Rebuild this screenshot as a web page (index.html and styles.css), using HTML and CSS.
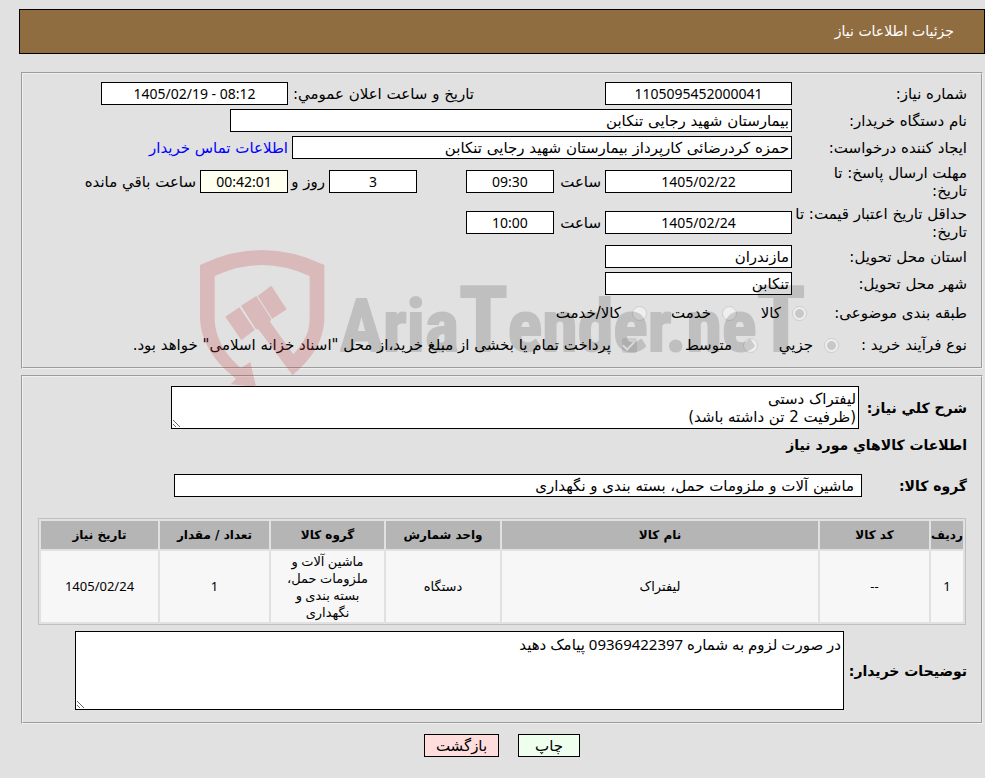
FILE: index.html
```html
<!DOCTYPE html>
<html lang="fa" dir="rtl">
<head>
  <meta charset="UTF-8" />
  <title>جزئیات اطلاعات نیاز</title>
  <link rel="stylesheet" href="styles.css">
</head>
<body>

  <h1>جزئیات اطلاعات نیاز</h1>

  <form class="page">
    <fieldset class="details">
      <div class="row">
        <label class="name" for="need_no">شماره نیاز:</label>
        <input class="box date" id="need_no" type="text" value="1105095452000041" readonly>
        <label class="announce" for="announce">تاریخ و ساعت اعلان عمومي:</label>
        <input class="box date" id="announce" type="text" value="1405/02/19 - 08:12" dir="ltr" readonly>
      </div>
      <div class="row">
        <label class="name" for="buyer">نام دستگاه خریدار:</label>
        <input class="box buyer" id="buyer" type="text" value="بیمارستان شهید رجایی تنکابن" readonly>
      </div>
      <div class="row">
        <label class="name" for="creator">ایجاد کننده درخواست:</label>
        <input class="box creator" id="creator" type="text" value="حمزه کردرضائی کارپرداز بیمارستان شهید رجایی تنکابن" readonly>
        <a href="#contact">اطلاعات تماس خریدار</a>
      </div>
      <div class="row deadline">
        <label class="name" for="reply_date">مهلت ارسال پاسخ: تا<br>تاریخ:</label>
        <input class="box date" id="reply_date" type="text" value="1405/02/22" readonly>
        <label class="hour" for="reply_hour">ساعت</label>
        <input class="box time" id="reply_hour" type="text" value="09:30" readonly>
        <input class="box time days" id="days" type="text" value="3" readonly>
        <label class="and" for="days">روز و</label>
        <input class="box time left" id="left" type="text" value="00:42:01" readonly>
        <label for="left">ساعت باقي مانده</label>
      </div>
      <div class="row deadline">
        <label class="name" for="price_date">حداقل تاریخ اعتبار قیمت: تا<br>تاریخ:</label>
        <input class="box date" id="price_date" type="text" value="1405/02/24" readonly>
        <label class="hour" for="price_hour">ساعت</label>
        <input class="box time" id="price_hour" type="text" value="10:00" readonly>
      </div>
      <div class="row">
        <label class="name" for="province">استان محل تحویل:</label>
        <input class="box place" id="province" type="text" value="مازندران" readonly>
      </div>
      <div class="row">
        <label class="name" for="city">شهر محل تحویل:</label>
        <input class="box place" id="city" type="text" value="تنکابن" readonly>
      </div>
      <div class="row choices">
        <span class="subject">طبقه بندی موضوعی:</span>
        <label class="choice goods"><input type="radio" name="subject" checked disabled>کالا</label>
        <label class="choice service"><input type="radio" name="subject" disabled>خدمت</label>
        <label class="choice"><input type="radio" name="subject" disabled>کالا/خدمت</label>
      </div>
      <div class="row choices">
        <span class="process">نوع فرآیند خرید :</span>
        <label class="choice small"><input type="radio" name="process" checked disabled>جزيي</label>
        <label class="choice medium"><input type="radio" name="process" disabled>متوسط</label>
        <label class="choice"><input type="checkbox" checked disabled>پرداخت تمام یا بخشی از مبلغ خرید،از محل "اسناد خزانه اسلامی" خواهد بود.</label>
      </div>
    </fieldset>

    <fieldset class="goods-info">
      <div class="row">
        <label class="title summary-name" for="summary">شرح کلي نیاز:</label>
        <textarea class="box summary" id="summary" readonly>لیفتراک دستی
(ظرفیت 2 تن داشته باشد)</textarea>
      </div>
      <h2 class="title">اطلاعات کالاهاي مورد نیاز</h2>
      <div class="row group">
        <label class="title group-name" for="group">گروه کالا:</label>
        <input class="box group-box" id="group" type="text" value="ماشین آلات و ملزومات حمل، بسته بندی و نگهداری" readonly>
      </div>
      <table>
        <thead>
          <tr>
            <th class="c-row">ردیف</th>
            <th class="c-code">کد کالا</th>
            <th>نام کالا</th>
            <th class="c-unit">واحد شمارش</th>
            <th class="c-group">گروه کالا</th>
            <th class="c-code">تعداد / مقدار</th>
            <th class="c-date">تاریخ نیاز</th>
          </tr>
        </thead>
        <tbody>
          <tr>
            <td>1</td>
            <td>--</td>
            <td>لیفتراک</td>
            <td>دستگاه</td>
            <td class="wrap">ماشین آلات و ملزومات حمل، بسته بندی و نگهداری</td>
            <td>1</td>
            <td>1405/02/24</td>
          </tr>
        </tbody>
      </table>
      <div class="row">
        <label class="title notes-name" for="notes">توضیحات خریدار:</label>
        <textarea class="box notes" id="notes" readonly>در صورت لزوم به شماره 09369422397 پیامک دهید</textarea>
      </div>
    </fieldset>

    <div class="buttons">
      <button class="print" type="button">چاپ</button>
      <button class="back" type="button">بازگشت</button>
    </div>

    <svg class="watermark" viewBox="0 0 1890 480" direction="ltr" aria-hidden="true">
      <g class="shield">
        <path d="M60 75Q245 -15 433 75V235C430 310 395 355 338 406L235 268L228 268L183 197L229 168L274 238L270 245L340 343C375 305 389 275 389 235V108Q245 42 104 108V235C104 290 135 345 183 384L211 366L228 440L152 433L168 416C100 365 62 300 60 235Z"/>
        <path d="M136 230L178 202L224 270L184 300Z"/>
        <path d="M233 168L274 137L320 208L277 236Z"/>
      </g>
      <text class="brand" x="480" y="334">Aria<tspan class="tall">T</tspan>ender.ne<tspan class="tall">T</tspan></text>
    </svg>
  </form>

</body>
</html>
```

FILE: styles.css
```css
* {
  box-sizing: border-box;
}
body {
  font-family: "DejaVu Sans", sans-serif;
  font-size: 15px;
  line-height: 18px;
  margin: 0;
  padding-top: 9px;
  background: #e1e1e1;
  color: #000;
}
h1 {
  margin: 0 0 18px 19px;
  padding: 13px 30px;
  border: 1px solid #000;
  background: #8f6d40;
  color: #fff;
  font-size: 14px;
  font-weight: normal;
  line-height: 17px;
}
.page {
  position: relative;
  margin: 0 2px 0 21px;
}
fieldset {
  margin: 0 0 6px;
  border: 2px groove #f0f0f0;
  padding: 8px 14px;
}
.details {
  display: flex;
  flex-direction: column;
  gap: 4px;
}
.row {
  display: flex;
  align-items: center;
  gap: 4px;
}
.deadline {
  height: 37px;
}
.name {
  width: 171px;
  white-space: nowrap;
}
.box {
  height: 23px;
  border: 1px solid #000;
  padding: 0 2px;
  background: #fff;
  color: #000;
  font: inherit;
  max-width: 100%;
}
.date,
.time {
  width: 187px;
  font-family: "Noto Sans", "DejaVu Sans", sans-serif;
  font-size: 14px;
  text-align: center;
}
.time {
  width: 88px;
}
.place {
  width: 187px;
}
.announce {
  width: 182px;
  margin-right: 127px;
  white-space: nowrap;
}
.buyer {
  width: 562px;
}
.creator {
  width: 500px;
}
.hour {
  width: 43px;
}
.days {
  margin-right: 45px;
}
.and {
  width: 33px;
  white-space: nowrap;
}
.left {
  background: #fffff0;
}
a {
  color: #00f;
  text-decoration: none;
}
.choices {
  gap: 0;
  height: 28px;
}
.choice {
  display: flex;
  align-items: center;
  gap: 11px;
  white-space: nowrap;
}
.subject {
  width: 160px;
}
.process {
  width: 128px;
}
.goods {
  width: 70px;
}
.service {
  width: 90px;
}
.small {
  width: 81px;
}
.medium {
  width: 121px;
}
input[type="radio"],
input[type="checkbox"] {
  appearance: none;
  flex-shrink: 0;
  width: 15px;
  height: 15px;
  margin: 0;
  border: 1px solid #cdcdcd;
  border-radius: 50%;
  background: #efefef;
}
input[type="radio"]:checked {
  background: radial-gradient(circle, #c8c8c8 4px, #efefef 5px);
}
input[type="checkbox"] {
  border-radius: 2px;
  background: #cdcdcd;
}
input[type="checkbox"]:checked::after {
  content: "";
  display: block;
  width: 5px;
  height: 9px;
  margin: 0 4px;
  border: solid #fff;
  border-width: 0 2px 2px 0;
  transform: rotate(45deg);
}
.title {
  margin: 0;
  font-size: 14px;
  font-weight: bold;
  white-space: nowrap;
}
.goods-info {
  padding-top: 9px;
  padding-bottom: 12px;
}
textarea.box {
  line-height: 18px;
  padding: 3px 2px;
}
.summary-name {
  width: 104px;
}
.summary {
  width: 688px;
  height: 43px;
}
h2 {
  padding: 7px 0 20px;
}
.group-name {
  width: 101px;
}
.group-box {
  width: 688px;
  padding-right: 7px;
}
table {
  width: calc(100% - 2px);
  margin: 21px 1px 6px 0;
  table-layout: fixed;
  border: 1px solid #c0c0c0;
  border-spacing: 2px;
  font-size: 13px;
  line-height: 17px;
  text-align: center;
}
th {
  height: 28px;
  padding: 0;
  background: #b5b5b5;
  font-size: 12px;
}
td {
  height: 71px;
  padding: 0;
  background: #f7f7f7;
  font-family: "Noto Sans", "DejaVu Sans", sans-serif;
}
.wrap {
  padding: 0 12px;
}
.c-row {
  width: 32px;
}
.c-code {
  width: 109px;
}
.c-unit {
  width: 114px;
}
.c-group {
  width: 113px;
}
.c-date {
  width: 117px;
}
.notes-name {
  width: 119px;
}
.notes {
  width: 769px;
  height: 79px;
  font-family: "Noto Sans", "DejaVu Sans", sans-serif;
}
.buttons {
  display: flex;
  justify-content: center;
  gap: 19px;
  margin-top: 10px;
}
button {
  height: 23px;
  border: 1px solid #000;
  padding: 0;
  font: inherit;
}
.print {
  width: 62px;
  background: #eeffee;
}
.back {
  width: 75px;
  background: #ffdddd;
}
/* site mark lies over the whole form */
.watermark {
  position: absolute;
  top: 168px;
  left: 159px;
  width: 630px;
  pointer-events: none;
}
.shield {
  fill: #c03c3c;
  opacity: 0.24;
}
.brand {
  fill: #000;
  stroke: #000;
  stroke-width: 6px;
  stroke-linejoin: round;
  opacity: 0.15;
  font-family: "Roboto Condensed", Roboto, sans-serif;
  font-size: 216px;
  font-weight: bold;
}
.tall {
  font-size: 270px;
}
```
